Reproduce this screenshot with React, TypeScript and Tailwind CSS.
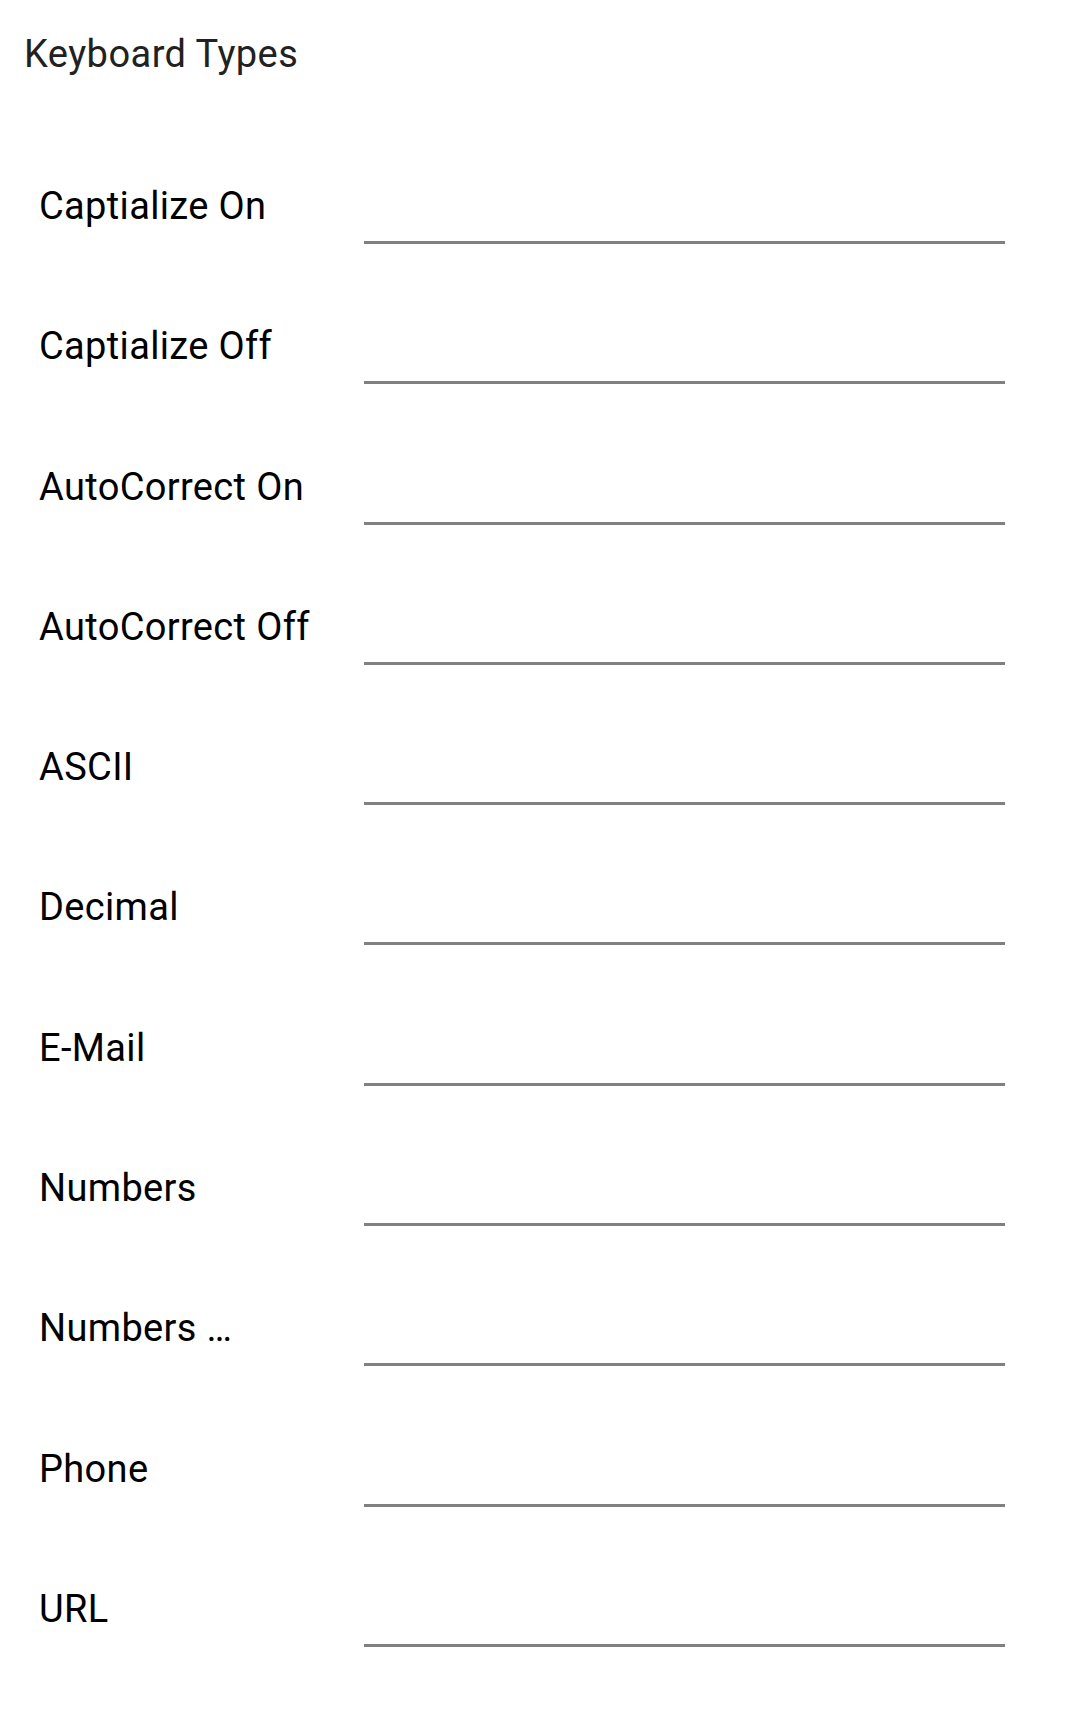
import React from 'react';

const fields = [
  'Captialize On',
  'Captialize Off',
  'AutoCorrect On',
  'AutoCorrect Off',
  'ASCII',
  'Decimal',
  'E-Mail',
  'Numbers',
  'Numbers …',
  'Phone',
  'URL',
];

export default function App() {
  return (
    <div className="min-h-[1711px] w-[1069px] bg-white font-['Roboto',sans-serif]">
      <div className="h-[142px] pl-[24px] pt-[33px] text-[38px] leading-[42px] tracking-[0.45px] text-[#212121]">
        Keyboard Types
      </div>
      {fields.map((label) => (
        <div key={label} className="flex h-[140.3px]">
          <div className="w-[364px] shrink-0 truncate pl-[39px] pt-[43px] text-[38px] leading-[42px] tracking-[0.35px] text-black">
            {label}
          </div>
          <div className="mr-[64px] h-[102px] flex-1 border-b-[3px] border-[#808080]" />
        </div>
      ))}
    </div>
  );
}
